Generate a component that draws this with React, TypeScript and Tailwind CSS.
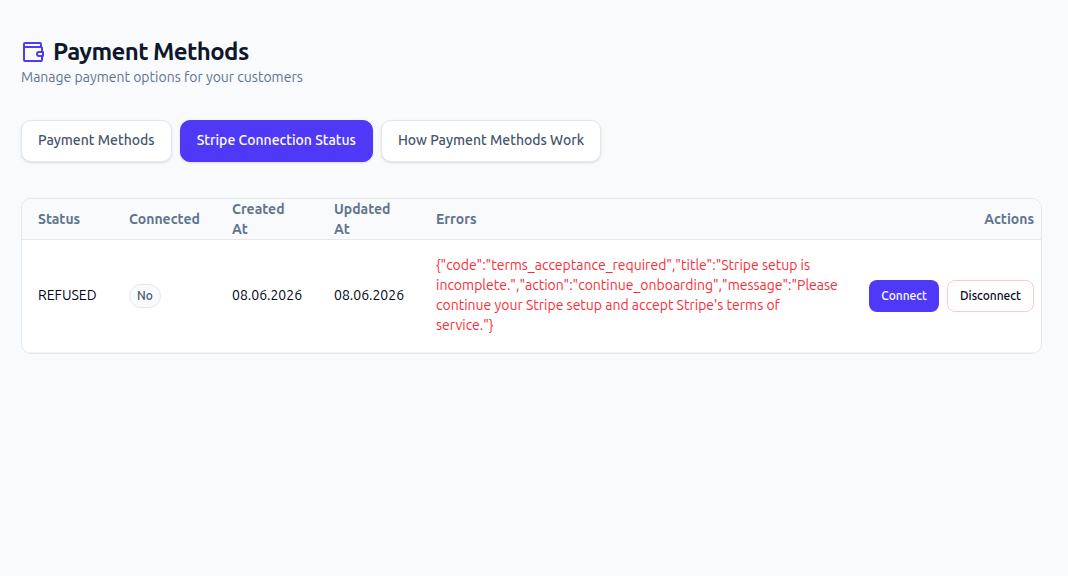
import { useState } from 'react'
import { clsx } from 'clsx'

const TABS = ['Payment Methods', 'Stripe Connection Status', 'How Payment Methods Work']

const ERROR_TEXT =
  '{"code":"terms_acceptance_required","title":"Stripe setup is incomplete.","action":"continue_onboarding","message":"Please continue your Stripe setup and accept Stripe\'s terms of service."}'

function WalletIcon() {
  return (
    <svg
      aria-hidden="true"
      viewBox="0 0 24 24"
      className="size-6 shrink-0 text-[#4f39f6]"
      fill="none"
      stroke="currentColor"
      strokeWidth="2"
      strokeLinejoin="round"
    >
      <path d="M21 11V8a1 1 0 0 0-1-1H3V4a1 1 0 0 1 1-1h15a1 1 0 0 1 1 1v3" />
      <path d="M3 7v13a1 1 0 0 0 1 1h16a1 1 0 0 0 1-1v-4" />
      <path d="M22 12h-4a2 2 0 0 0 0 4h4z" />
    </svg>
  )
}

export default function App() {
  const [active, setActive] = useState(1)

  return (
    <main className="min-h-screen bg-slate-50 pt-10 pr-[26px] pb-8 pl-[21px] font-['Ubuntu','Noto_Sans',sans-serif] text-sm text-slate-950">
      <header>
        <h1 className="flex h-6 items-center gap-2 text-2xl font-semibold tracking-tight text-slate-900">
          <WalletIcon />
          Payment Methods
        </h1>
        <p className="mt-[3px] leading-5 text-slate-500">Manage payment options for your customers</p>
      </header>

      <nav className="mt-[33px] flex flex-wrap gap-2">
        {TABS.map((label, i) => (
          <button
            key={label}
            type="button"
            onClick={() => setActive(i)}
            className={clsx(
              'h-[42px] rounded-[10px] border px-4 pb-0.5 font-medium shadow-sm',
              i === active
                ? 'border-[#4f39f6] bg-[#4f39f6] text-white'
                : 'border-slate-200 bg-white text-slate-600',
            )}
          >
            {label}
          </button>
        ))}
      </nav>

      <section className="mt-9 overflow-hidden rounded-[10px] border border-slate-200 bg-white">
        <table className="w-full table-fixed border-separate border-spacing-0 text-left leading-5">
          <colgroup>
            <col className="w-[91px]" />
            <col className="w-[103px]" />
            <col className="w-[102px]" />
            <col className="w-[102px]" />
            <col />
            <col className="w-[188px]" />
          </colgroup>
          <thead className="bg-slate-50 text-slate-500 [&_th]:border-b [&_th]:border-slate-200">
            <tr>
              <th className="pl-4 font-semibold">Status</th>
              <th className="pl-4 font-semibold">Connected</th>
              <th className="px-4 font-semibold">Created At</th>
              <th className="px-4 font-semibold">Updated At</th>
              <th className="px-4 font-semibold">Errors</th>
              <th className="pr-[7px] text-right font-semibold">Actions</th>
            </tr>
          </thead>
          <tbody className="[&_td]:border-b [&_td]:border-slate-100">
            <tr>
              <td className="pt-[15px] pb-[17px] pl-4">REFUSED</td>
              <td className="py-4 pl-4">
                <span className="inline-flex h-6 items-center rounded-full border border-slate-200 bg-slate-50 px-[7px] text-xs font-medium text-slate-600">
                  No
                </span>
              </td>
              <td className="pt-[15px] pb-[17px] pl-4">08.06.2026</td>
              <td className="pt-[15px] pb-[17px] pl-4">08.06.2026</td>
              <td className="px-4 pt-[15px] pb-[17px] text-[#fb2c36]">{ERROR_TEXT}</td>
              <td className="py-4 pr-[7px]">
                <div className="flex justify-end gap-2">
                  <button
                    type="button"
                    className="h-8 rounded-lg bg-[#4f39f6] px-3 text-xs font-medium text-white"
                  >
                    Connect
                  </button>
                  <button
                    type="button"
                    className="h-8 rounded-lg border border-red-200 bg-white px-3 text-xs font-medium"
                  >
                    Disconnect
                  </button>
                </div>
              </td>
            </tr>
          </tbody>
        </table>
      </section>
    </main>
  )
}
